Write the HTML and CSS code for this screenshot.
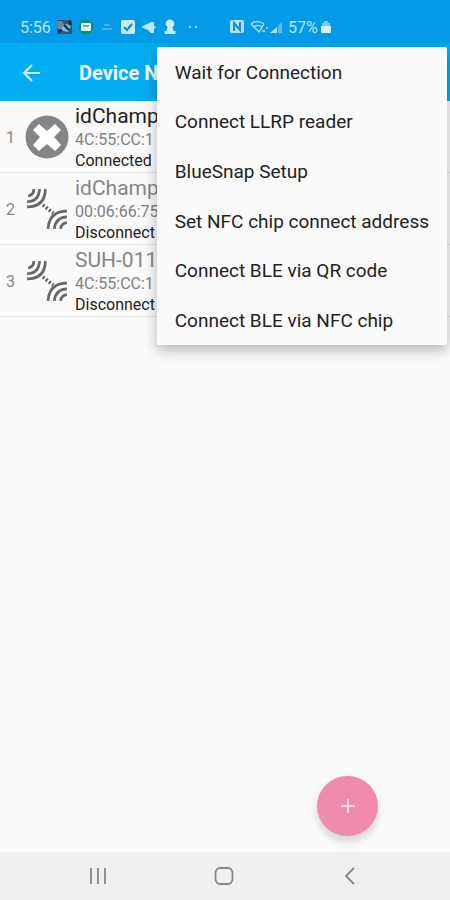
FILE: index.html
```html
<!DOCTYPE html>
<html lang="en">
<head>
<meta charset="utf-8">
<meta name="viewport" content="width=device-width, initial-scale=1">
<title>Devices</title>
<link rel="stylesheet" href="styles.css">
</head>
<body>
<svg class="defs" aria-hidden="true">
  <symbol id="waves" viewBox="0 0 42 42">
    <g fill="none" stroke="#666" stroke-width="2.600">
      <path d="M3 8.500Q8 8 8.500 2M2 14Q13 14 14 2M2 19Q19 19 19.500 2"/>
      <path d="M40 34Q34.500 34.500 34 40M40 28.500Q29 29 28 40M40 23Q23 23 22 40"/>
      <path d="M17 17l10 8" stroke-width="3.500" stroke-dasharray="2 1.800"/>
    </g>
  </symbol>
</svg>
<div class="screen">
  <div class="status">
    <span class="clock">5:56</span>
    <svg class="tray" viewBox="0 0 146 18" aria-hidden="true">
      <rect x="1" y="2" width="15" height="14" rx="1" fill="#355273"/>
      <path d="M1 3h5l3 4-4 5-4-2z" fill="#6f8296"/>
      <path d="M5 10l5-4 5 2-3 6-5-1z" fill="#7cb5e6"/>
      <path d="M8 7l5 5M13 3l2 4M2 14l4-2" stroke="#142b4c" stroke-width="2"/>
      <circle cx="30" cy="9" r="7.500" fill="#0d8b7f"/>
      <rect x="25" y="5" width="10" height="8" rx="1" fill="#e3f5ed"/>
      <path d="M27 8h6" stroke="#439c83" stroke-width="1.500"/>
      <path d="M48 7h6M46 11h10" stroke="#55b9ee" stroke-width="1.500"/>
      <rect x="65" y="2" width="14" height="14" rx="2" fill="#c6ecfc"/>
      <path d="M68 9l3 3 5-6" fill="none" stroke="#1685c2" stroke-width="2"/>
      <path d="M85 9l10-5h3v4l2 1-2 2v4h-3l-3-3z" fill="#b9e7fb"/>
      <path d="M109.500 6a4.500 4.500 0 0 1 9 0q0 2-2 3l1 4h2v3h-11v-3h2l1-4q-2-1-2-3z" fill="#c6ecfc"/>
      <circle cx="134" cy="9" r="1.300" fill="#8dd4f7"/>
      <circle cx="140" cy="9" r="1.300" fill="#8dd4f7"/>
    </svg>
    <svg class="signal" viewBox="0 0 54 18" aria-hidden="true">
      <rect x="0" y="2" width="14" height="13" rx="2" fill="#b4e3f8"/>
      <path d="M4 13V5l6 7V4" fill="none" stroke="#168fce" stroke-width="2"/>
      <path d="M21 6q6-5 13 0M24 9q4-3 8 0M21 6l8 8 5-8" fill="none" stroke="#a9dff8" stroke-width="1.400"/>
      <path d="M32 13h3m1-3h2" stroke="#a9dff8" stroke-width="1.500"/>
      <path d="M40 15l7-6v6z" fill="#b4e3f8"/>
      <path d="M48 8l4-4v11h-4z" fill="#59bdf0"/>
    </svg>
    <span class="battery">57%</span>
    <svg class="cell" viewBox="0 0 10 14" aria-hidden="true"><path d="M3 1h4v2h2v4H1V3h2z" fill="#7dccf5"/><path d="M0 6h10v6q0 1-1 1H1q-1 0-1-1z" fill="#d3effc"/></svg>
  </div>
  <header class="appbar">
    <button class="back" type="button" aria-label="Back"><svg viewBox="0 0 18 18" aria-hidden="true"><path d="M17 9H1M9 1L1 9l8 8" fill="none" stroke="#d5f2fe" stroke-width="2"/></svg></button>
    <h1 class="title">Device N</h1>
  </header>
  <main class="content">
    <ol class="devices">
      <li class="device active">
        <span class="index">1</span>
        <svg class="icon" viewBox="0 0 44 44" aria-hidden="true"><circle cx="22" cy="22" r="21.500" fill="#858585"/><path d="M14 9l8 7 8-7 6 6-7 7 7 8-6 6-8-7-8 7-6-6 7-8-7-7z" fill="#fff"/></svg>
        <div class="info"><span class="name">idChamp</span><span class="address">4C:55:CC:1</span><span class="state">Connected</span></div>
      </li>
      <li class="device">
        <span class="index">2</span>
        <svg class="icon" aria-hidden="true"><use href="#waves"/></svg>
        <div class="info"><span class="name">idChamp</span><span class="address">00:06:66:75</span><span class="state">Disconnect</span></div>
      </li>
      <li class="device">
        <span class="index">3</span>
        <svg class="icon" aria-hidden="true"><use href="#waves"/></svg>
        <div class="info"><span class="name">SUH-011</span><span class="address">4C:55:CC:1</span><span class="state">Disconnect</span></div>
      </li>
    </ol>
    <button class="fab" type="button" aria-label="Add device"><svg viewBox="0 0 16 16" aria-hidden="true"><path d="M8 1v14M1 8h14" stroke="#fbdce7" stroke-width="2"/></svg></button>
  </main>
  <nav class="navbar">
    <button type="button" aria-label="Recent apps"><svg viewBox="0 0 20 20" aria-hidden="true"><path d="M3 2v16M10 2v16M17 2v16" stroke="#858585" stroke-width="1.800"/></svg></button>
    <button type="button" aria-label="Home"><svg viewBox="0 0 20 20" aria-hidden="true"><rect x="1.500" y="2" width="17" height="16" rx="5" fill="none" stroke="#858585" stroke-width="1.800"/></svg></button>
    <button type="button" aria-label="Back"><svg viewBox="0 0 20 20" aria-hidden="true"><path d="M14 2l-8 8 8 8" fill="none" stroke="#858585" stroke-width="1.800"/></svg></button>
  </nav>
  <div class="menu" role="menu">
    <button type="button" role="menuitem">Wait for Connection</button>
    <button type="button" role="menuitem">Connect LLRP reader</button>
    <button type="button" role="menuitem">BlueSnap Setup</button>
    <button type="button" role="menuitem">Set NFC chip connect address</button>
    <button type="button" role="menuitem">Connect BLE via QR code</button>
    <button type="button" role="menuitem">Connect BLE via NFC chip</button>
  </div>
</div>
</body>
</html>
```
FILE: styles.css
```css
* { box-sizing: border-box; }
body { margin: 0; background: #fafafa; color: #222; font-family: Roboto, "Liberation Sans", sans-serif; }
button { margin: 0; padding: 0; border: 0; background: none; font: inherit; color: inherit; }
svg { display: block; flex: none; }
.defs { position: absolute; width: 0; height: 0; }
.screen { position: relative; display: flex; flex-direction: column; min-height: 100vh; overflow: hidden; }

.status { display: flex; align-items: center; height: 43px; padding: 11px 20px 0; background: #039be8; color: #b9e6fb; font-size: 16px; }
.clock { width: 36px; }
.tray { width: 146px; height: 18px; }
.signal { width: 54px; height: 18px; margin-left: 28px; }
.battery { width: 33px; margin-left: 4px; }
.cell { width: 10px; height: 14px; }

.appbar { display: flex; align-items: center; height: 58px; padding: 2px 23px 0; background: #03adf1; }
.back { width: 56px; }
.back svg { width: 18px; height: 18px; }
.title { margin: 0; color: #ebf9ff; font-size: 20px; font-weight: 700; line-height: 24px; }

.content { position: relative; flex: 1; }
.devices { margin: 0; padding: 0; list-style: none; }
.device { display: flex; align-items: center; padding: 2px 0 1px 6px; border-bottom: 1px solid #e2e2e2; }
.index { width: 19px; color: #858585; font-size: 16px; }
.icon { width: 44px; height: 44px; margin-right: 6px; }
.info { display: flex; flex-direction: column; white-space: nowrap; }
.name { color: #858585; font-size: 21px; line-height: 26px; }
.active .name { color: #222; }
.address { color: #808080; font-size: 16px; line-height: 22px; }
.state { font-size: 16px; line-height: 20px; }

.fab { position: absolute; right: 72px; bottom: 16px; display: grid; place-items: center; width: 61px; height: 60px; border-radius: 50%; background: #f08bb0; box-shadow: 0 5px 8px rgba(0, 0, 0, .16); }
.fab svg { width: 16px; height: 16px; }

.navbar { display: flex; justify-content: space-between; align-items: center; height: 48px; padding: 0 90px 0 88px; background: #f0f0f0; }
.navbar svg { width: 20px; height: 20px; }

.menu { position: absolute; top: 47px; right: 3px; display: grid; min-height: 298px; border-radius: 2px; background: #fafafa; box-shadow: 0 5px 14px rgba(0, 0, 0, .28); }
.menu button { padding: 15px 18px 13px; font-size: 19px; line-height: 20px; text-align: left; white-space: nowrap; }
```
